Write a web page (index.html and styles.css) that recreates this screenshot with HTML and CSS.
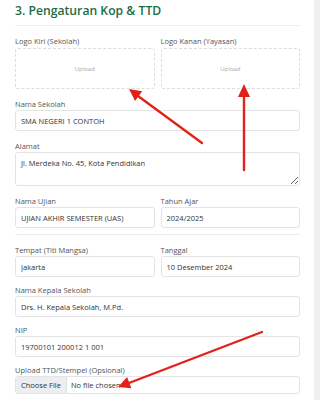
FILE: index.html
```html
<!DOCTYPE html>
<html lang="id">
<head>
  <meta charset="UTF-8">
  <title>Pengaturan Kop & TTD</title>
  <meta name="viewport" content="width=device-width, initial-scale=1.0">
  <link rel="stylesheet" href="styles.css">
</head>
<body>
<div class="page">
  <h3 class="section-title">3. Pengaturan Kop &amp; TTD</h3>

  <div class="row row-logo">
    <div class="field">
      <label>Logo Kiri (Sekolah)</label>
      <div class="upload-box">Upload</div>
    </div>
    <div class="field">
      <label>Logo Kanan (Yayasan)</label>
      <div class="upload-box">Upload</div>
    </div>
  </div>

  <div class="field field-wide">
    <label>Nama Sekolah</label>
    <input class="form-input" type="text" value="SMA NEGERI 1 CONTOH">
  </div>

  <div class="field field-wide">
    <label>Alamat</label>
    <textarea class="form-input form-area">Jl. Merdeka No. 45, Kota Pendidikan</textarea>
  </div>

  <div class="row">
    <div class="field">
      <label>Nama Ujian</label>
      <input class="form-input" type="text" value="UJIAN AKHIR SEMESTER (UAS)">
    </div>
    <div class="field">
      <label>Tahun Ajar</label>
      <input class="form-input" type="text" value="2024/2025">
    </div>
  </div>

  <hr class="divider">

  <div class="row">
    <div class="field">
      <label>Tempat (Titi Mangsa)</label>
      <input class="form-input" type="text" value="Jakarta">
    </div>
    <div class="field">
      <label>Tanggal</label>
      <input class="form-input" type="text" value="10 Desember 2024">
    </div>
  </div>

  <div class="field">
    <label>Nama Kepala Sekolah</label>
    <input class="form-input" type="text" value="Drs. H. Kepala Sekolah, M.Pd.">
  </div>

  <div class="field">
    <label>NIP</label>
    <input class="form-input" type="text" value="19700101 200012 1 001">
  </div>

  <div class="field">
    <label>Upload TTD/Stempel (Opsional)</label>
    <input class="form-input form-file" type="file">
  </div>

  <!-- panah anotasi -->
  <svg class="annotations" width="320" height="400" viewBox="0 0 320 400">
    <g stroke="#e0221b" stroke-width="2.4" stroke-linecap="round" fill="#e0221b">
      <line x1="202" y1="143" x2="138" y2="96"/>
      <polygon points="129,89 142.2,91.3 135.1,101" stroke="none"/>
      <line x1="244" y1="170" x2="244" y2="96"/>
      <polygon points="244,84 250,97 238,97" stroke="none"/>
      <line x1="262" y1="332" x2="129" y2="383"/>
      <polygon points="118,387 131.4,388.3 127.1,377.1" stroke="none"/>
    </g>
  </svg>
</div>
</body>
</html>
```

FILE: styles.css
```css
body {
  margin: 0;
  background-color: #efefef;
  font-family: "Open Sans", Arial, sans-serif;
}

.page {
  position: relative;
  width: 314px;
  min-height: 400px;
  box-sizing: border-box;
  padding: 2px 14px 0 15px;
  background: #ffffff;
  overflow: hidden;
}

.section-title {
  margin: 0 0 10px 0;
  padding-bottom: 5px;
  border-bottom: 1px solid #ececec;
  font-size: 12.2px;
  line-height: 18px;
  font-weight: 600;
  color: #1d6b45;
}

.row {
  display: grid;
  grid-template-columns: 1fr 1fr;
  gap: 6px;
}

.field {
  margin-bottom: 8px;
}

.field-wide {
  margin-bottom: 10px;
}

.row-logo .field {
  margin-bottom: 10px;
}

.field label {
  display: block;
  font-size: 7.5px;
  line-height: 10px;
  color: #555;
  margin-bottom: 1px;
}

.row-logo label {
  margin-bottom: 2px;
}

.upload-box {
  height: 41px;
  box-sizing: border-box;
  border: 1px dashed #dcdcdc;
  border-radius: 3px;
  display: flex;
  align-items: center;
  justify-content: center;
  font-size: 6px;
  color: #aaa;
}

.form-input {
  display: block;
  width: 100%;
  height: 21px;
  box-sizing: border-box;
  margin: 0;
  padding: 0 5px;
  border: 1px solid #e4e4e4;
  border-radius: 3px;
  font-family: "Open Sans", Arial, sans-serif;
  font-size: 7.5px;
  color: #333;
  background: #fff;
  outline: none;
}

.form-area {
  height: 34px;
  padding: 5px;
  resize: vertical;
  line-height: 10px;
}

.form-file {
  height: 18px;
  padding: 0;
  overflow: hidden;
}

.form-file::file-selector-button {
  height: 100%;
  margin: 0 4px 0 0;
  padding: 0 5px;
  border: none;
  border-right: 1px solid #e0e0e0;
  background-color: #eceeef;
  font-family: "Open Sans", Arial, sans-serif;
  font-size: 7.5px;
  color: #333;
}

.divider {
  border: none;
  border-top: 1px solid #ececec;
  margin: -2px 0 10px 0;
}

.annotations {
  position: absolute;
  left: 0;
  top: 0;
  pointer-events: none;
}
```
